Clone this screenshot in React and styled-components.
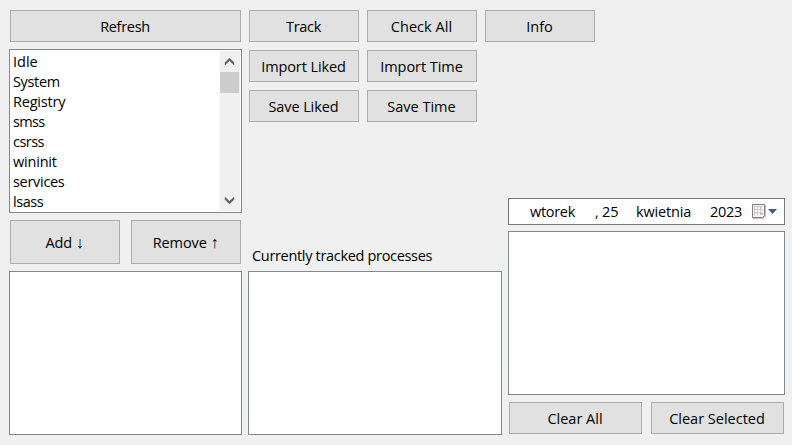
import React from "react";
import styled, { createGlobalStyle } from "styled-components";

const GlobalStyle = createGlobalStyle`
  *, *::before, *::after { box-sizing: border-box; }
  body {
    margin: 0;
    background: #f0f0f0;
    color: #000;
    font: 14.5px/20px "Open Sans", "Noto Sans", sans-serif;
    font-stretch: 93%;
  }
`;

const Window = styled.main`
  display: flex;
  gap: 6px;
  width: 792px;
  height: 445px;
  padding: 10px 7px 10px 9px;
  overflow: hidden;
`;

const Sidebar = styled.section`
  display: flex;
  flex-direction: column;
  gap: 7px;
  width: 233px;
`;

const Workspace = styled.div`
  display: flex;
  flex: 1;
  flex-direction: column;
  justify-content: space-between;
`;

const Toolbar = styled.div`
  display: grid;
  grid-template-columns: repeat(3, 110px);
  grid-auto-rows: 32px;
  gap: 8px;
  padding-left: 1px;
`;

const Panels = styled.div`
  display: flex;
  align-items: flex-end;
  gap: 6px;
`;

const TrackedPanel = styled.section`
  display: flex;
  flex-direction: column;
  gap: 5px;
  width: 254px;
`;

const HistoryPanel = styled.section`
  display: flex;
  flex-direction: column;
  width: 277px;
  gap: 6px;
  padding-bottom: 1px;
`;

const ButtonRow = styled.div`
  display: flex;
  justify-content: space-between;
  gap: ${(p) => p.$gap || 0}px;
  padding: ${(p) => p.$top || 0}px 1px 0;
`;

const Button = styled.button`
  display: flex;
  flex: 1;
  align-items: center;
  justify-content: center;
  height: ${(p) => p.$height || 32}px;
  padding: 2px 1px 0 0;
  border: 1px solid #adadad;
  border-radius: 0;
  background: #e1e1e1;
  color: #000;
  font: inherit;
  letter-spacing: ${(p) => p.$tracking || 0}px;
  white-space: pre;
`;

const Arrow = styled.span`
  font-family: "Liberation Sans", sans-serif;
  font-size: 16px;
`;

const ListBox = styled.div`
  display: flex;
  justify-content: space-between;
  height: 164px;
  padding: 1px;
  border: 1px solid #828790;
  background: #fff;
`;

const Items = styled.ul`
  margin: 0;
  padding: 1px 0 0 2px;
  list-style: none;
`;

const Item = styled.li`
  height: 20px;
  letter-spacing: ${(p) => p.$tracking || 0}px;
`;

const ScrollBar = styled.div`
  display: flex;
  flex-direction: column;
  width: 20px;
  background: #f0f0f0;
`;

const ScrollArrow = styled.svg`
  display: block;
  width: 20px;
  height: 21px;
  flex: none;
`;

const ScrollTrack = styled.div`
  flex: 1;
`;

const Thumb = styled.div`
  width: 19px;
  height: 21px;
  background: #cdcdcd;
`;

const Caption = styled.label`
  height: 20px;
  padding-left: 4px;
  letter-spacing: ${(p) => p.$tracking || 0}px;
  white-space: nowrap;
`;

const DateField = styled.div`
  display: flex;
  align-items: center;
  height: 27px;
  padding-left: 21px;
  border: 1px solid #7a7a7a;
  background: #fff;
`;

const DatePart = styled.span`
  width: ${(p) => p.$width}px;
  padding-top: 1px;
  letter-spacing: ${(p) => p.$tracking || 0}px;
  white-space: pre;
`;

const CalendarIcon = styled.svg`
  display: block;
  width: 27px;
  height: 17px;
`;

const processes = [
  ["Idle", 0],
  ["System", -0.35],
  ["Registry", -0.2],
  ["smss", -0.7],
  ["csrss", -0.55],
  ["wininit", -0.2],
  ["services", -0.3],
  ["lsass", -0.45],
];

const actions = [
  ["Track", -0.3],
  ["Check All", 0.05],
  ["Info", 0],
  ["Import Liked", -0.1],
  ["Import Time", -0.05],
  null,
  ["Save Liked", -0.1],
  ["Save Time", 0],
];

const dateParts = [
  ["wtorek", 65, -0.3],
  [", 25", 41, -0.2],
  ["kwietnia", 74, -0.15],
  ["2023", 41, -0.25],
];

export default function App() {
  return (
    <>
      <GlobalStyle />
      <Window>
        <Sidebar>
          <ButtonRow>
            <Button $tracking={-0.3}>Refresh</Button>
          </ButtonRow>
          <ListBox>
            <Items>
              {processes.map(([name, tracking]) => (
                <Item key={name} $tracking={tracking}>{name}</Item>
              ))}
            </Items>
            <ScrollBar>
              <ScrollArrow viewBox="0 0 20 21">
                <path d="M9.5 7 14 11.5V14L9.5 9.8 5 14v-2.5z" fill="#606060" stroke="#606060" strokeWidth="0.4" />
              </ScrollArrow>
              <ScrollTrack><Thumb /></ScrollTrack>
              <ScrollArrow viewBox="0 0 20 21">
                <path d="M9.5 14 14 9.5V7L9.5 11.2 5 7v2.5z" fill="#606060" stroke="#606060" strokeWidth="0.4" />
              </ScrollArrow>
            </ScrollBar>
          </ListBox>
          <ButtonRow $gap={11}>
            <Button $height={44} $tracking={-0.1}>Add <Arrow>↓</Arrow></Button>
            <Button $height={44} $tracking={-0.1}>Remove <Arrow>↑</Arrow></Button>
          </ButtonRow>
          <ListBox />
        </Sidebar>
        <Workspace>
          <Toolbar>
            {actions.map((action, i) =>
              action ? (
                <Button key={action[0]} $tracking={action[1]}>{action[0]}</Button>
              ) : (
                <span key={i} />
              )
            )}
          </Toolbar>
          <Panels>
            <TrackedPanel>
              <Caption $tracking={-0.32}>Currently tracked processes</Caption>
              <ListBox />
            </TrackedPanel>
            <HistoryPanel>
              <DateField>
                {dateParts.map(([text, width, tracking]) => (
                  <DatePart key={text} $width={width} $tracking={tracking}>{text}</DatePart>
                ))}
                <CalendarIcon viewBox="0 0 27 17">
                  <path d="M2 2h13v11l-3 3H2z" fill="#c4bfc1" />
                  <path d="M1.5 1.5h12v11l-2 2h-10z" fill="#f7f7fa" stroke="#857b7b" />
                  <path d="M3 3h9v9H3z" fill="#c5c8d2" />
                  <path d="M4 4h2v2H4zM7 4h2v2H7zM10 4h2v2h-2zM4 7h2v2H4zM7 7h2v2H7zM10 7h2v2h-2zM4 10h2v2H4zM7 10h2v2H7z" fill="#fff" />
                  <path d="M17 6h9l-4.5 5z" fill="#44598a" />
                </CalendarIcon>
              </DateField>
              <ListBox />
              <ButtonRow $gap={9} $top={1}>
                <Button>Clear All</Button>
                <Button>Clear Selected</Button>
              </ButtonRow>
            </HistoryPanel>
          </Panels>
        </Workspace>
      </Window>
    </>
  );
}
